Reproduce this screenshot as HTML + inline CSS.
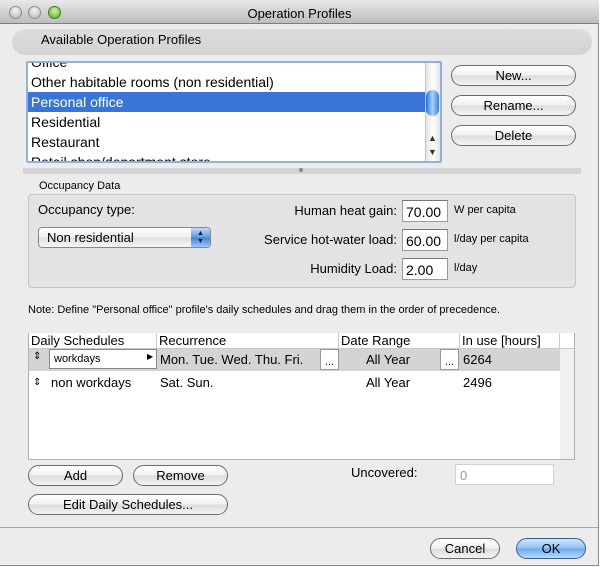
<!DOCTYPE html>
<html><head><style>
*{box-sizing:border-box;margin:0;padding:0}
body{width:603px;height:567px;background:#fff;font-family:"Liberation Sans",sans-serif;font-size:13px;color:#000;position:relative;overflow:hidden}
.a{position:absolute;white-space:nowrap}
.win{left:0;top:0;width:599px;height:566px;background:#ececec;border-right:1px solid #8a8a8a;border-bottom:1px solid #8a8a8a}
.title{left:0;top:0;width:599px;height:24px;background:linear-gradient(#e8e8e8,#bdbdbd);border-bottom:1px solid #7e7e7e;text-align:center;line-height:28px;font-size:13px}
.tl{top:6px;width:13px;height:13px;border-radius:50%;background:radial-gradient(circle at 50% 30%,#f4f4f4,#b4b4b4);border:1px solid #8c8c8c}
.btn{border:1px solid #6b6b6b;border-radius:11px;background:linear-gradient(#fff,#f0f0f0 50%,#dcdcdc 51%,#f4f4f4);text-align:center;font-size:13px}
.fld{background:#fff;border:1px solid #9a9a9a;border-top-color:#777;font-size:14px;padding-left:3px}
.row{left:28px;width:413px;height:20px;line-height:20px;padding-left:3px;font-size:14px}
.hd{top:333px;height:16px;line-height:15px;border-right:1px solid #c8c8c8;padding-left:2px;font-size:13px;background:#fff}
.small{font-size:11px}
</style></head><body>
<div class="a win"></div>
<div class="a title">Operation Profiles</div>
<div class="a tl" style="left:9px"></div>
<div class="a tl" style="left:28px"></div>
<div class="a tl" style="left:48px;background:radial-gradient(circle at 50% 35%,#d4f5a0,#58a82a);border-color:#3f7a1e"></div>

<div class="a" style="left:12px;top:29px;width:580px;height:26px;border-radius:13px;background:linear-gradient(#dcdcdc,#d3d3d3);"></div>
<div class="a" style="left:41px;top:31px;line-height:18px;font-size:13px">Available Operation Profiles</div>

<div class="a" style="left:26px;top:61px;width:416px;height:102px;border:2px solid #8fb1dc;border-radius:2px;background:#fff;overflow:hidden">
</div>
<div class="a" style="left:28px;top:63px;width:397px;height:98px;overflow:hidden">
 <div class="a row" style="left:0;top:-11px">Office</div>
 <div class="a row" style="left:0;top:9px">Other habitable rooms (non residential)</div>
 <div class="a row" style="left:0;top:29px;background:#3875d7;color:#fff">Personal office</div>
 <div class="a row" style="left:0;top:49px">Residential</div>
 <div class="a row" style="left:0;top:69px">Restaurant</div>
 <div class="a row" style="left:0;top:89px">Retail shop/department store</div>
</div>
<div class="a" style="left:425px;top:63px;width:15px;height:98px;background:linear-gradient(90deg,#e4e4e4,#fff,#e4e4e4);border-left:1px solid #c4c4c4"></div>
<div class="a" style="left:426px;top:90px;width:13px;height:26px;border-radius:7px;background:linear-gradient(90deg,#2a6fcf,#a8d4ff,#3a80d8)"></div>
<div class="a" style="left:428px;top:133px;font-size:9px;color:#333">▲</div>
<div class="a" style="left:428px;top:147px;font-size:9px;color:#333">▼</div>

<div class="a btn" style="left:451px;top:65px;width:125px;height:21px;line-height:19px">New...</div>
<div class="a btn" style="left:451px;top:95px;width:125px;height:21px;line-height:19px">Rename...</div>
<div class="a btn" style="left:451px;top:125px;width:125px;height:21px;line-height:19px">Delete</div>

<div class="a" style="left:23px;top:168px;width:558px;height:6px;background:#d4d4d4"></div>
<div class="a" style="left:299px;top:168px;width:4px;height:4px;border-radius:50%;background:#888"></div>

<div class="a small" style="left:39px;top:180px">Occupancy Data</div>
<div class="a" style="left:28px;top:194px;width:548px;height:94px;background:#e3e3e3;border:1px solid #c6c6c6;border-radius:4px"></div>
<div class="a" style="left:38px;top:202px;font-size:13px">Occupancy type:</div>
<div class="a" style="left:38px;top:227px;width:173px;height:21px;border:1px solid #888;border-radius:4px;background:linear-gradient(#fff,#eee 50%,#e0e0e0 51%,#f6f6f6);padding-left:8px;line-height:19px;font-size:13px">Non residential</div>
<div class="a" style="left:191px;top:228px;width:19px;height:19px;border-radius:0 3px 3px 0;background:linear-gradient(#bcd9ff,#5c9ae8 50%,#3d82e0 51%,#9cc8ff);font-size:7px;color:#111;text-align:center;line-height:8px;padding-top:2px">▲<br>▼</div>

<div class="a" style="left:200px;top:203px;width:197px;text-align:right">Human heat gain:</div>
<div class="a" style="left:200px;top:232px;width:197px;text-align:right">Service hot-water load:</div>
<div class="a" style="left:200px;top:261px;width:197px;text-align:right">Humidity Load:</div>
<div class="a fld" style="left:402px;top:200px;width:46px;height:22px;line-height:22px">70.00</div>
<div class="a fld" style="left:402px;top:229px;width:46px;height:22px;line-height:22px">60.00</div>
<div class="a fld" style="left:402px;top:258px;width:46px;height:22px;line-height:22px">2.00</div>
<div class="a small" style="left:454px;top:204px">W per capita</div>
<div class="a small" style="left:454px;top:233px">l/day per capita</div>
<div class="a small" style="left:454px;top:262px">l/day</div>

<div class="a small" style="left:28px;top:304px">Note: Define "Personal office" profile's daily schedules and drag them in the order of precedence.</div>

<div class="a" style="left:28px;top:333px;width:547px;height:127px;background:#fff;border:1px solid #b0b0b0"></div>
<div class="a" style="left:560px;top:349px;width:14px;height:110px;background:#f0f0f0"></div>
<div class="a hd" style="left:29px;width:128px">Daily Schedules</div>
<div class="a hd" style="left:157px;width:182px">Recurrence</div>
<div class="a hd" style="left:339px;width:121px">Date Range</div>
<div class="a hd" style="left:460px;width:100px">In use [hours]</div>
<div class="a hd" style="left:560px;width:14px;border-right:none"></div>
<div class="a" style="left:29px;top:348px;width:545px;height:1px;background:#c8c8c8"></div>
<div class="a" style="left:29px;top:349px;width:531px;height:22px;background:#d4d4d4"></div>
<div class="a" style="left:33px;top:351px;font-size:10px">⇕</div>
<div class="a" style="left:49px;top:349px;width:108px;height:20px;background:#fff;border:1px solid #888;font-size:11px;line-height:18px;padding-left:4px">workdays</div>
<div class="a" style="left:147px;top:352px;font-size:8px">▶</div>
<div class="a" style="left:160px;top:352px">Mon. Tue. Wed. Thu. Fri.</div>
<div class="a" style="left:320px;top:349px;width:19px;height:21px;background:#fff;border:1px solid #999;font-size:11px;text-align:center;line-height:24px">...</div>
<div class="a" style="left:366px;top:352px">All Year</div>
<div class="a" style="left:440px;top:349px;width:19px;height:21px;background:#fff;border:1px solid #999;font-size:11px;text-align:center;line-height:24px">...</div>
<div class="a" style="left:463px;top:352px">6264</div>
<div class="a" style="left:33px;top:377px;font-size:10px">⇕</div>
<div class="a" style="left:51px;top:375px">non workdays</div>
<div class="a" style="left:160px;top:375px">Sat. Sun.</div>
<div class="a" style="left:366px;top:375px">All Year</div>
<div class="a" style="left:463px;top:375px">2496</div>

<div class="a btn" style="left:28px;top:465px;width:95px;height:21px;line-height:19px">Add</div>
<div class="a btn" style="left:133px;top:465px;width:95px;height:21px;line-height:19px">Remove</div>
<div class="a btn" style="left:28px;top:494px;width:200px;height:21px;line-height:19px">Edit Daily Schedules...</div>
<div class="a" style="left:351px;top:465px">Uncovered:</div>
<div class="a" style="left:455px;top:464px;width:99px;height:21px;background:#fff;border:1px solid #d0d0d0;color:#999;line-height:21px;padding-left:4px">0</div>

<div class="a" style="left:0;top:527px;width:598px;height:1px;background:#a8a8a8"></div>
<div class="a btn" style="left:430px;top:538px;width:70px;height:21px;line-height:19px">Cancel</div>
<div class="a btn" style="left:516px;top:538px;width:70px;height:21px;line-height:19px;border-color:#3a5f95;background:linear-gradient(#d2e8ff,#8ec0f4 50%,#6aa9ec 51%,#b8dcff)">OK</div>
</body></html>
